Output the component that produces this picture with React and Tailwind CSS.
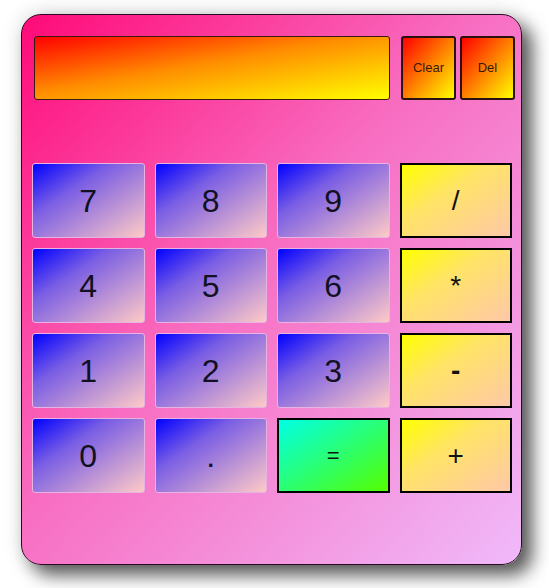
import React from "react";

const numCls =
  "h-[75px] flex items-center justify-center rounded-[3px] border border-[#e6b4e4] bg-linear-to-br/srgb from-[#0000ff] via-[#7a5ee4] via-35% to-[#ffcac6] text-[32px] text-[#111122]";
const opCls =
  "h-[75px] flex items-center justify-center border-2 border-black bg-linear-to-br/srgb from-[#ffff00] via-[#ffe466] via-40% to-[#ffc8a8] text-[28px] text-[#111]";

export default function App() {
  return (
    <div
      className="w-[549px] h-[588px] bg-white pt-[14px] pl-[21px]"
      style={{ fontFamily: '"Liberation Sans", Arial, sans-serif' }}
    >
      <div className="w-[501px] h-[551px] rounded-[20px] border border-[#2a0a20] bg-linear-to-br/srgb from-[#ff0a78] via-[#f86cc0] via-45% to-[#f0bafa] shadow-[10px_10px_18px_rgba(0,0,0,0.65),0_-2px_22px_rgba(0,0,0,0.12)] pt-[21px] pl-[10px] pr-[9px]">
        <div className="flex items-stretch h-[64px] pl-[2px]">
          <div className="w-[356px] shrink-0 rounded-[3px] border border-[#3a1a10] bg-linear-to-br/srgb from-[#ff0000] via-[#ff8c00] via-45% to-[#ffff00]"></div>
          <div className="ml-[11px] w-[55px] shrink-0 flex items-center justify-center rounded-[3px] border-2 border-[#2a1010] bg-linear-to-br/srgb from-[#ff0000] to-[#ffff00] text-[13px] text-[#3a1808]">
            Clear
          </div>
          <div className="ml-[4px] w-[55px] shrink-0 flex items-center justify-center rounded-[3px] border-2 border-[#2a1010] bg-linear-to-br/srgb from-[#ff0000] to-[#ffff00] text-[13px] text-[#3a1808]">
            Del
          </div>
        </div>
        <div className="mt-[63px] grid grid-cols-4 gap-[10px]">
          <div className={numCls}>7</div>
          <div className={numCls}>8</div>
          <div className={numCls}>9</div>
          <div className={opCls}>/</div>
          <div className={numCls}>4</div>
          <div className={numCls}>5</div>
          <div className={numCls}>6</div>
          <div className={opCls}>*</div>
          <div className={numCls}>1</div>
          <div className={numCls}>2</div>
          <div className={numCls}>3</div>
          <div className={opCls + " font-bold"}>-</div>
          <div className={numCls}>0</div>
          <div className={numCls + " text-[24px]"}>.</div>
          <div className="h-[75px] flex items-center justify-center border-2 border-black bg-linear-to-br/srgb from-[#00ffe6] to-[#55ff00] text-[22px] text-[#111]">
            =
          </div>
          <div className={opCls}>+</div>
        </div>
      </div>
    </div>
  );
}
